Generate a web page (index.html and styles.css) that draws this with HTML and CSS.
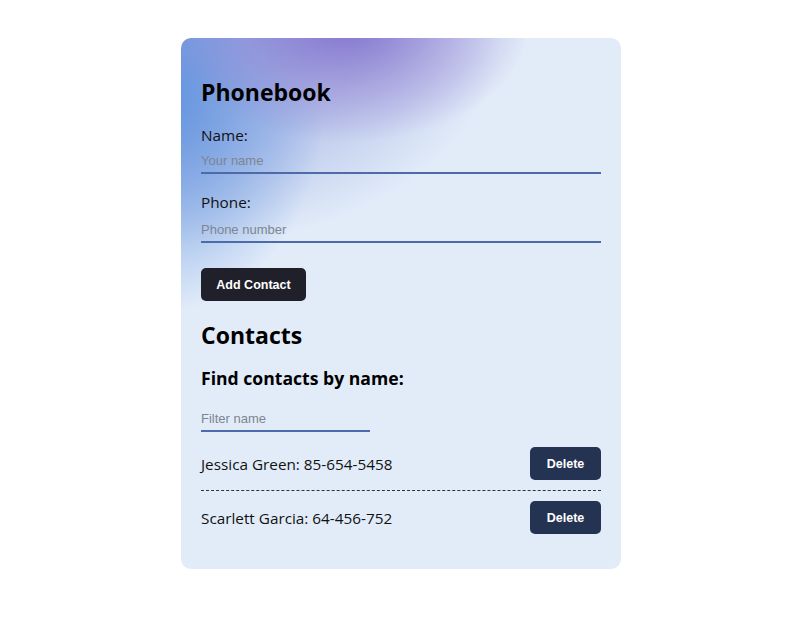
FILE: index.html
```html
<!DOCTYPE html>
<html lang="en">
<head>
<meta charset="utf-8">
<title>Phonebook</title>
<link rel="stylesheet" href="styles.css">
</head>
<body>
<div class="card">
  <h2 class="title">Phonebook</h2>
  <form class="form">
    <label class="field">
      <span class="label">Name:</span>
      <input class="input" type="text" placeholder="Your name">
    </label>
    <label class="field field-phone">
      <span class="label">Phone:</span>
      <input class="input input-phone" type="tel" placeholder="Phone number">
    </label>
    <button class="btn-add" type="button">Add Contact</button>
  </form>
  <h2 class="title title-contacts">Contacts</h2>
  <h3 class="subtitle">Find contacts by name:</h3>
  <input class="input filter" type="text" placeholder="Filter name">
  <ul class="list">
    <li class="item"><span class="item-text">Jessica Green: 85-654-5458</span><button class="btn-del" type="button">Delete</button></li>
    <li class="item"><span class="item-text">Scarlett Garcia: 64-456-752</span><button class="btn-del" type="button">Delete</button></li>
  </ul>
</div>
</body>
</html>
```

FILE: styles.css
```css
html, body {
  margin: 0;
  padding: 0;
  background: #ffffff;
}

body {
  font-family: "Open Sans", "Noto Sans", sans-serif;
  color: #111;
}

.card {
  width: 440px;
  box-sizing: border-box;
  margin: 38px 0 0 calc(50% - 219px);
  padding: 20px 20px 25px;
  border-radius: 10px;
  background-color: #e2ecf9;
  background-image:
    radial-gradient(ellipse 185px 120px at 165px -15px, rgba(128, 110, 204, 0.95), rgba(150, 136, 213, 0.55) 55%, rgba(226, 236, 249, 0) 100%),
    radial-gradient(ellipse 165px 215px at -20px 60px, rgba(96, 146, 222, 1), rgba(118, 160, 226, 0.6) 55%, rgba(226, 236, 249, 0) 100%),
    radial-gradient(ellipse 320px 210px at 0 0, rgba(138, 158, 220, 0.85), rgba(160, 175, 226, 0.6) 55%, rgba(226, 236, 249, 0) 100%);
  background-repeat: no-repeat;
}

.title {
  margin: 18px 0 0;
  font-size: 23px;
  line-height: 32px;
  font-weight: 700;
  color: #000;
}

.form {
  display: flex;
  flex-direction: column;
  align-items: flex-start;
  margin-top: 17px;
}

.field {
  display: flex;
  flex-direction: column;
  width: 100%;
}

.field-phone {
  margin-top: 18px;
}

.label {
  font-size: 15.3px;
  line-height: 20px;
  color: #111;
}

.input {
  display: block;
  box-sizing: border-box;
  width: 100%;
  margin-top: 3px;
  padding: 4px 0 3px;
  border: none;
  border-bottom: 2px solid #4d6aa9;
  background: transparent;
  font-family: "Liberation Sans", Arial, sans-serif;
  font-size: 13px;
  line-height: 17px;
  color: #222;
  outline: none;
}

.input-phone {
  margin-top: 4px;
  padding-top: 5px;
}

.input::placeholder {
  color: #7d8591;
}

.btn-add {
  margin-top: 25px;
  width: 105px;
  height: 33px;
  padding: 0;
  border: none;
  border-radius: 5px;
  background: #1f2029;
  color: #fff;
  font-family: "Liberation Sans", Arial, sans-serif;
  font-size: 12.5px;
  font-weight: 700;
  cursor: pointer;
}

.title-contacts {
  margin-top: 18px;
}

.subtitle {
  margin: 15px 0 0;
  font-size: 17.6px;
  line-height: 25px;
  font-weight: 700;
  color: #000;
}

.filter {
  width: 169px;
  margin-top: 15px;
}

.list {
  list-style: none;
  margin: 5px 0 0;
  padding: 0;
}

.item {
  display: flex;
  align-items: center;
  justify-content: space-between;
  padding: 10px 0;
  border-bottom: 1px dashed #333;
}

.item:last-child {
  border-bottom: none;
}

.item-text {
  font-size: 15.3px;
  line-height: 20px;
  color: #111;
}

.btn-del {
  width: 71px;
  height: 33px;
  border: none;
  border-radius: 5px;
  background: #253352;
  color: #fff;
  font-family: "Liberation Sans", Arial, sans-serif;
  font-size: 12.5px;
  font-weight: 700;
  cursor: pointer;
}
```
